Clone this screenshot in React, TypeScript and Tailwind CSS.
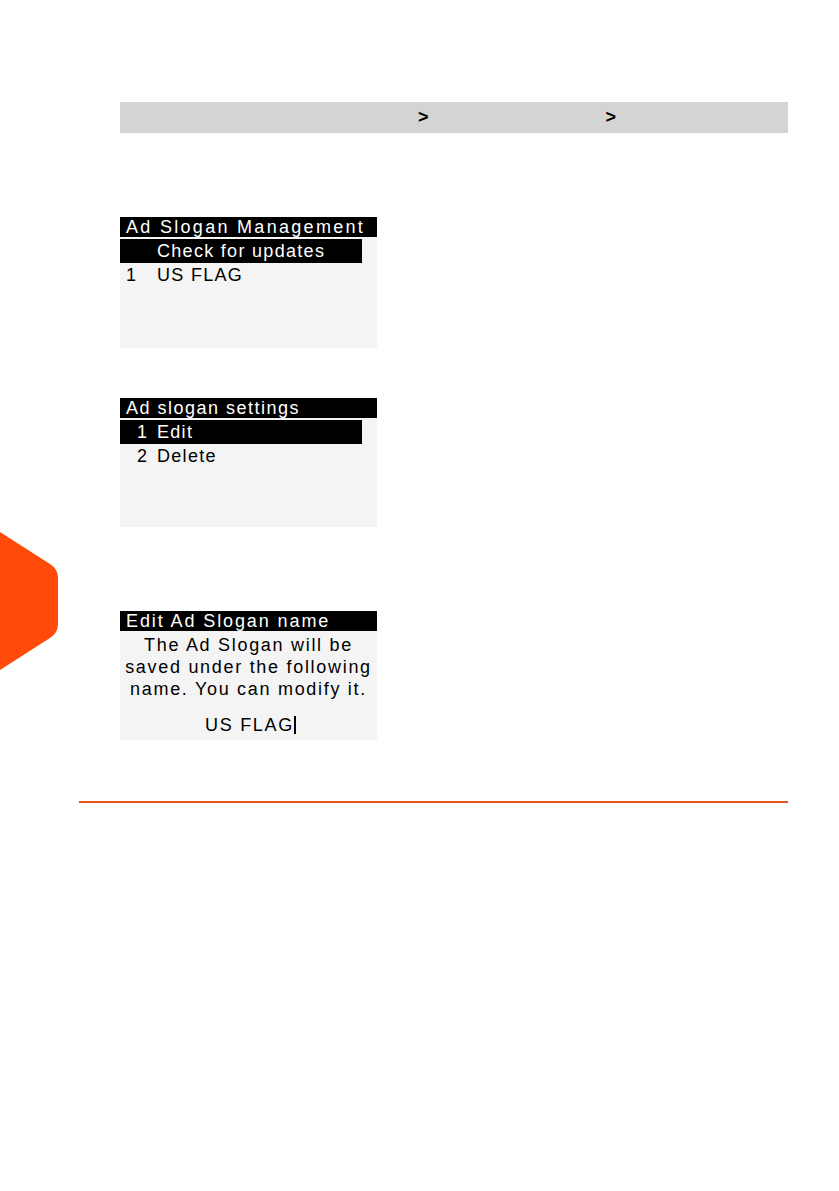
import type { ReactNode } from 'react';

const lcdFont = { fontFamily: '"Liberation Sans", Arial, sans-serif' };

function LcdScreen({ title, children, height, tracking }: { title: string; children: ReactNode; height: string; tracking: string }) {
  return (
    <div className={`w-[257px] bg-[#f4f4f4] ${height}`} style={lcdFont}>
      <div className={`h-[20px] bg-black pl-[6px] text-[18px] leading-[20px] text-white ${tracking}`}>{title}</div>
      {children}
    </div>
  );
}

function SideTab() {
  return (
    <svg className="absolute left-0 top-[530px]" width="60" height="142" viewBox="0 0 60 142">
      <path d="M0 2 L50 34 Q58 39 58 48 L58 94 Q58 103 50 108 L0 140 Z" fill="#ff4a0a" />
    </svg>
  );
}

export default function App() {
  return (
    <div className="relative min-h-[1191px] w-[839px] bg-white">
      <SideTab />
      <div className="pl-[79px] pt-[102px]">
        <div className="ml-[41px]">
          <div className="flex h-[31px] w-[668px] items-center bg-[#d4d4d4] text-[18px] font-bold text-black" style={lcdFont}>
            <span className="w-[298px]" />
            <span>&gt;</span>
            <span className="w-[177px]" />
            <span>&gt;</span>
          </div>

          <div className="mt-[84px]">
            <LcdScreen title="Ad Slogan Management" height="h-[131px]" tracking="tracking-[2.3px]">
              <div className="mt-[2px] flex h-[24px] w-[242px] items-center bg-black text-[18px] tracking-[1.3px] text-white">
                <span className="w-[37px]" />
                <span>Check for updates</span>
              </div>
              <div className="flex h-[24px] items-center text-[18px] tracking-[1.3px] text-black">
                <span className="w-[37px] pl-[6px]">1</span>
                <span>US FLAG</span>
              </div>
            </LcdScreen>
          </div>

          <div className="mt-[50px]">
            <LcdScreen title="Ad slogan settings" height="h-[129px]" tracking="tracking-[1.5px]">
              <div className="mt-[2px] flex h-[24px] w-[242px] items-center bg-black text-[18px] tracking-[1.3px] text-white">
                <span className="w-[37px] pl-[17px]">1</span>
                <span>Edit</span>
              </div>
              <div className="flex h-[24px] items-center text-[18px] tracking-[1.3px] text-black">
                <span className="w-[37px] pl-[17px]">2</span>
                <span>Delete</span>
              </div>
            </LcdScreen>
          </div>

          <div className="mt-[84px]">
            <LcdScreen title="Edit Ad Slogan name" height="h-[129px]" tracking="tracking-[1.9px]">
              <div className="pt-[3px] text-center text-[18px] leading-[22px] tracking-[1.7px] text-black">
                <div>The Ad Slogan will be</div>
                <div>saved under the following</div>
                <div>name. You can modify it.</div>
                <div className="mt-[14px] flex items-center justify-center pl-[4px]">
                  <span>US FLAG</span>
                  <span className="inline-block h-[18px] w-[2px] bg-black" />
                </div>
              </div>
            </LcdScreen>
          </div>
        </div>

        <div className="mt-[61px] h-[2px] w-[709px] bg-[#e4531f]" />
      </div>
    </div>
  );
}
